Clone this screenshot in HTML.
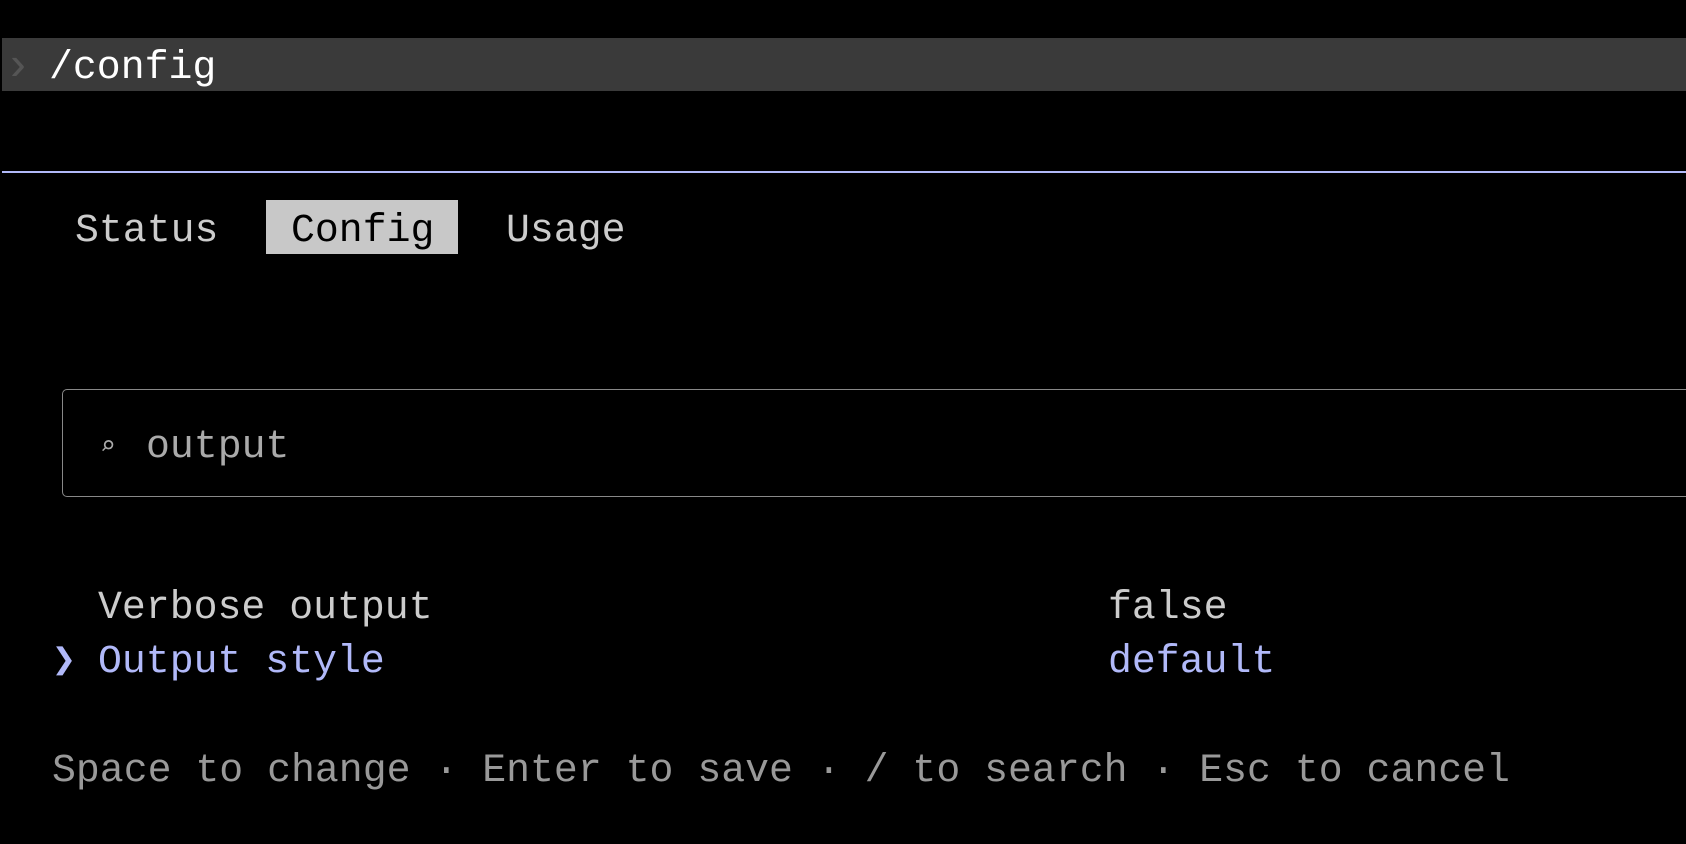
<!DOCTYPE html>
<html><head><meta charset="utf-8"><style>
html,body{margin:0;padding:0;background:#000;width:1686px;height:844px;overflow:hidden}
body{font-family:"Liberation Mono","DejaVu Sans Mono",monospace;font-size:39.85px;color:#ccc}
.a{position:absolute;white-space:pre;line-height:54px}
</style></head><body>
<div style="position:absolute;left:2px;top:38px;width:1684px;height:53px;background:#3a3a3a"></div>
<div class="a" style="left:4px;top:40px;color:#555;font-size:46px">›</div>
<div class="a" style="left:49px;top:41px;color:#fff">/config</div>
<div style="position:absolute;left:2px;top:171px;width:1684px;height:2px;background:#b1b9f9"></div>
<div class="a" style="left:75px;top:204px;color:#ccc">Status</div>
<div style="position:absolute;left:266px;top:200px;width:192px;height:54px;background:#c8c8c8"></div>
<div class="a" style="left:291px;top:204px;color:#000">Config</div>
<div class="a" style="left:506px;top:204px;color:#ccc">Usage</div>
<div style="position:absolute;left:62px;top:389px;width:1660px;height:106px;border:1.5px solid #888;border-radius:5px"></div>
<div class="a" style="left:100px;top:420px;color:#aaa;font-size:26px">⌕</div>
<div class="a" style="left:146px;top:420px;color:#aaa">output</div>
<div class="a" style="left:98px;top:581px;color:#ccc">Verbose output</div>
<div class="a" style="left:1108px;top:581px;color:#ccc">false</div>
<div class="a" style="left:52px;top:635px;color:#b1b9f9">❯</div>
<div class="a" style="left:98px;top:635px;color:#b1b9f9">Output style</div>
<div class="a" style="left:1108px;top:635px;color:#b1b9f9">default</div>
<div class="a" style="left:52px;top:744px;color:#999">Space to change · Enter to save · / to search · Esc to cancel</div>
</body></html>
